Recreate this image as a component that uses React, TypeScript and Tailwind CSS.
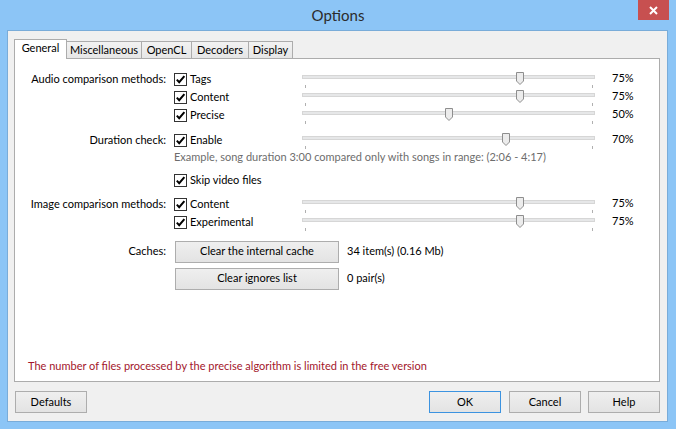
import React from 'react';

const font = { fontFamily: 'Lato, "Liberation Sans", sans-serif' };

function CheckBox({ label }: { label: string }) {
  return (
    <div className="flex items-center h-full">
      <div className="w-[13px] h-[13px] border border-[#333333] bg-white flex items-center justify-center">
        <svg width="11" height="11" viewBox="0 0 11 11">
          <path d="M1.8 5.6 L4.2 8.2 L9.4 2.2" fill="none" stroke="#000" strokeWidth="2" />
        </svg>
      </div>
      <span className="ml-[3px] text-[#000]">{label}</span>
    </div>
  );
}

function Slider({ value }: { value: number }) {
  const left = 3 + (value / 100) * 287;
  return (
    <div className="relative w-[293px] h-[18px] shrink-0">
      <div className="absolute left-0 right-0 top-[5px] h-[4px] bg-[#e6e7e8] border border-[#d6d6d6]" />
      <svg className="absolute top-[2px]" style={{ left: left - 4 }} width="8" height="13" viewBox="0 0 8 13">
        <path d="M0.5 0.5 H7.5 V9 L4 12.5 L0.5 9 Z" fill="#ececec" stroke="#8e8e8e" />
      </svg>
      <div className="absolute left-[3px] top-[15px] w-[1px] h-[3px] bg-[#b0b0b0]" />
      <div className="absolute left-[290px] top-[15px] w-[1px] h-[3px] bg-[#b0b0b0]" />
    </div>
  );
}

function Row({ label, check, value }: { label?: string; check: string; value: number }) {
  return (
    <div className="flex items-center h-[18px]">
      <div className="w-[151px] text-right">{label}</div>
      <div className="ml-[8px] w-[128px] h-full">
        <CheckBox label={check} />
      </div>
      <Slider value={value} />
      <div className="ml-[17px] -mt-[2px]">{value}%</div>
    </div>
  );
}

function Button({ children, className = '' }: { children: React.ReactNode; className?: string }) {
  return (
    <div
      className={`h-[22px] flex items-center justify-center border bg-gradient-to-b from-[#efefef] to-[#e3e3e3] text-[#000] ${className}`}
    >
      {children}
    </div>
  );
}

const tabs = [
  { name: 'General', w: 'w-[53px]' },
  { name: 'Miscellaneous', w: 'w-[75px]' },
  { name: 'OpenCL', w: 'w-[50px]' },
  { name: 'Decoders', w: 'w-[57px]' },
  { name: 'Display', w: 'w-[44px]' },
];

export default function App() {
  return (
    <div className="w-[676px] h-[429px] bg-[#8cc5f6] flex flex-col text-[11px] text-[#000]" style={font}>
      {/* title bar */}
      <div className="h-[30px] flex items-start shrink-0">
        <div className="flex-1 h-[31px] flex items-center justify-center pl-[38px] text-[15px] text-[#2b2b2b]">
          Options
        </div>
        <div className="w-[31px] h-[20px] bg-[#c75050] flex items-center justify-center mr-[7px]">
          <svg width="9" height="9" viewBox="0 0 9 9">
            <path d="M1 1 L8 8 M8 1 L1 8" stroke="#fff" strokeWidth="2" />
          </svg>
        </div>
      </div>

      {/* client area */}
      <div className="ml-[7px] w-[661px] h-[392px] bg-[#f0f0f0] border border-[#79acd9] flex flex-col">
        <div className="pl-[6px] pr-[7px] pt-[7px] flex flex-col">
          {/* tab strip */}
          <div className="flex items-end h-[20px] relative z-10">
            {tabs.map((t, i) =>
              i === 0 ? (
                <div
                  key={t.name}
                  className={`${t.w} h-[20px] bg-white border border-b-0 border-[#acacac] flex items-center justify-center -mb-[1px] pb-[2px]`}
                >
                  {t.name}
                </div>
              ) : (
                <div
                  key={t.name}
                  className={`${t.w} h-[17px] bg-gradient-to-b from-[#f2f2f2] to-[#e6e6e6] border border-b-0 border-l-0 border-[#acacac] flex items-center justify-center`}
                >
                  {t.name}
                </div>
              )
            )}
          </div>

          {/* panel */}
          <div className="h-[324px] bg-white border border-[#acacac] flex flex-col pt-[11px] pb-[7px]">
            <Row label="Audio comparison methods:" check="Tags" value={75} />
            <Row check="Content" value={75} />
            <Row check="Precise" value={50} />
            <div className="mt-[7px]">
              <Row label="Duration check:" check="Enable" value={70} />
            </div>
            <div className="h-[16px] flex items-center pl-[159px] text-[#6d6d6d]">
              Example, song duration 3:00 compared only with songs in range: (2:06 - 4:17)
            </div>
            <div className="mt-[6px] h-[18px] flex items-center pl-[159px]">
              <CheckBox label="Skip video files" />
            </div>
            <div className="mt-[6px]">
              <Row label="Image comparison methods:" check="Content" value={75} />
            </div>
            <Row check="Experimental" value={75} />

            <div className="mt-[10px] flex items-center h-[21px]">
              <div className="w-[151px] text-right">Caches:</div>
              <Button className="ml-[9px] w-[164px] h-[21px] border-[#adadad]">Clear the internal cache</Button>
              <div className="ml-[8px]">34 item(s) (0.16 Mb)</div>
            </div>
            <div className="mt-[6px] flex items-center h-[21px]">
              <div className="w-[151px]" />
              <Button className="ml-[9px] w-[164px] h-[21px] border-[#adadad]">Clear ignores list</Button>
              <div className="ml-[8px]">0 pair(s)</div>
            </div>

            <div className="mt-auto h-[16px] flex items-center pl-[13px] text-[#a3162b]">
              The number of files processed by the precise algorithm is limited in the free version
            </div>
          </div>
        </div>

        {/* bottom buttons */}
        <div className="mt-[9px] flex items-center pl-[7px] pr-[7px]">
          <Button className="w-[72px] border-[#adadad]">Defaults</Button>
          <div className="flex-1" />
          <Button className="w-[72px] border-[#3c93e0]">OK</Button>
          <Button className="w-[72px] ml-[8px] border-[#adadad]">Cancel</Button>
          <Button className="w-[72px] ml-[7px] border-[#adadad]">Help</Button>
        </div>
      </div>
    </div>
  );
}
